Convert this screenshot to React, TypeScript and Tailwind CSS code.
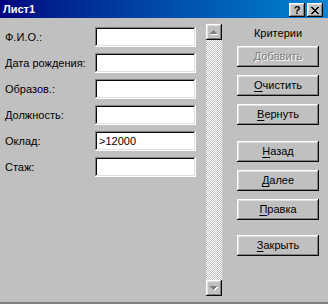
const raised =
  'shadow-[inset_-1px_-1px_#0a0a0a,inset_1px_1px_#ffffff,inset_-2px_-2px_#808080,inset_2px_2px_#dfdfdf]'
const sunken =
  'shadow-[inset_-1px_-1px_#ffffff,inset_1px_1px_#808080,inset_-2px_-2px_#dfdfdf,inset_2px_2px_#0a0a0a]'

const fields = [
  { label: 'Ф.И.О.:', value: '' },
  { label: 'Дата рождения:', value: '' },
  { label: 'Образов.:', value: '' },
  { label: 'Должность:', value: '' },
  { label: 'Оклад:', value: '>12000' },
  { label: 'Стаж:', value: '' },
]

function Arrow({ down }: { down?: boolean }) {
  const d = 'M3 0h1v1H3z M2 1h3v1H2z M1 2h5v1H1z M0 3h7v1H0z'
  return (
    <svg
      width="8"
      height="5"
      viewBox="0 0 8 5"
      shapeRendering="crispEdges"
      className={down ? 'rotate-180' : ''}
    >
      <path d={d} fill="#ffffff" transform={down ? 'translate(0 0)' : 'translate(1 1)'} />
      <path d={d} fill="#808080" transform={down ? 'translate(1 1)' : 'translate(0 0)'} />
    </svg>
  )
}

function Btn({
  label,
  hot,
  disabled,
  className = '',
}: {
  label: string
  hot?: boolean
  disabled?: boolean
  className?: string
}) {
  return (
    <div
      className={`h-[21px] w-[82px] flex items-center justify-center bg-[#c0c0c0] ${raised} ${className}`}
    >
      {disabled ? (
        <span className="text-[#808080] [text-shadow:1px_1px_0_#ffffff]">{label}</span>
      ) : (
        <span>
          {hot ? <span className="underline underline-offset-[2px]">{label[0]}</span> : label[0]}
          {label.slice(1)}
        </span>
      )}
    </div>
  )
}

export default function App() {
  return (
    <div className="w-[328px] h-[304px] flex flex-col bg-[#c0c0c0] text-[11px] text-black font-['Liberation_Sans',Arial,sans-serif] overflow-hidden">
      {/* caption */}
      <div className="h-[18px] flex items-start bg-linear-to-r from-[#000080] to-[#1084d0]">
        <span className="pl-[3px] pt-[2px] text-white font-bold text-[11px] leading-[14px]">Лист1</span>
        <div className="ml-auto mt-[3px] flex gap-[2px] mr-[5px]">
          <div className={`w-[16px] h-[14px] flex items-center justify-center bg-[#c0c0c0] ${raised}`}>
            <span className="font-bold text-[11px] leading-[11px]">?</span>
          </div>
          <div className={`w-[16px] h-[14px] flex items-center justify-center bg-[#c0c0c0] ${raised}`}>
            <svg width="8" height="7" viewBox="0 0 8 7" shapeRendering="crispEdges">
              <path
                fill="#000"
                d="M0 0h2v1H0z M6 0h2v1H6z M1 1h2v1H1z M5 1h2v1H5z M2 2h4v1H2z M3 3h2v1H3z M2 4h4v1H2z M1 5h2v1H1z M5 5h2v1H5z M0 6h2v1H0z M6 6h2v1H6z"
              />
            </svg>
          </div>
        </div>
      </div>

      {/* body */}
      <div className="flex-1 flex border-b-2 border-[#808080]">
        <div className="w-[196px] pt-[9px] flex flex-col gap-[6px]">
          {fields.map((f) => (
            <div key={f.label} className="h-[20px] flex items-center">
              <span className="w-[95px] pl-[5px]">{f.label}</span>
              <div className={`w-[101px] h-[20px] bg-white flex items-center px-[4px] ${sunken}`}>
                {f.value}
              </div>
            </div>
          ))}
        </div>

        <div className="ml-[10px] mt-[6px] w-[16px] h-[272px] flex flex-col">
          <div className={`h-[16px] flex items-center justify-center bg-[#c0c0c0] ${raised}`}>
            <Arrow />
          </div>
          <div className="flex-1 bg-[image:repeating-conic-gradient(#c0c0c0_0%_25%,#ffffff_0%_50%)] bg-[length:2px_2px]" />
          <div className={`h-[16px] flex items-center justify-center bg-[#c0c0c0] ${raised}`}>
            <Arrow down />
          </div>
        </div>

        <div className="ml-[15px] w-[82px] pt-[8px] flex flex-col">
          <div className="h-[14px] leading-[14px] text-center">Критерии</div>
          <Btn label="Добавить" disabled className="mt-[6px]" />
          <Btn label="Очистить" hot className="mt-[8px]" />
          <Btn label="Вернуть" hot className="mt-[8px]" />
          <Btn label="Назад" hot className="mt-[16px]" />
          <Btn label="Далее" hot className="mt-[8px]" />
          <Btn label="Правка" hot className="mt-[8px]" />
          <Btn label="Закрыть" hot className="mt-[15px]" />
        </div>
      </div>
    </div>
  )
}
